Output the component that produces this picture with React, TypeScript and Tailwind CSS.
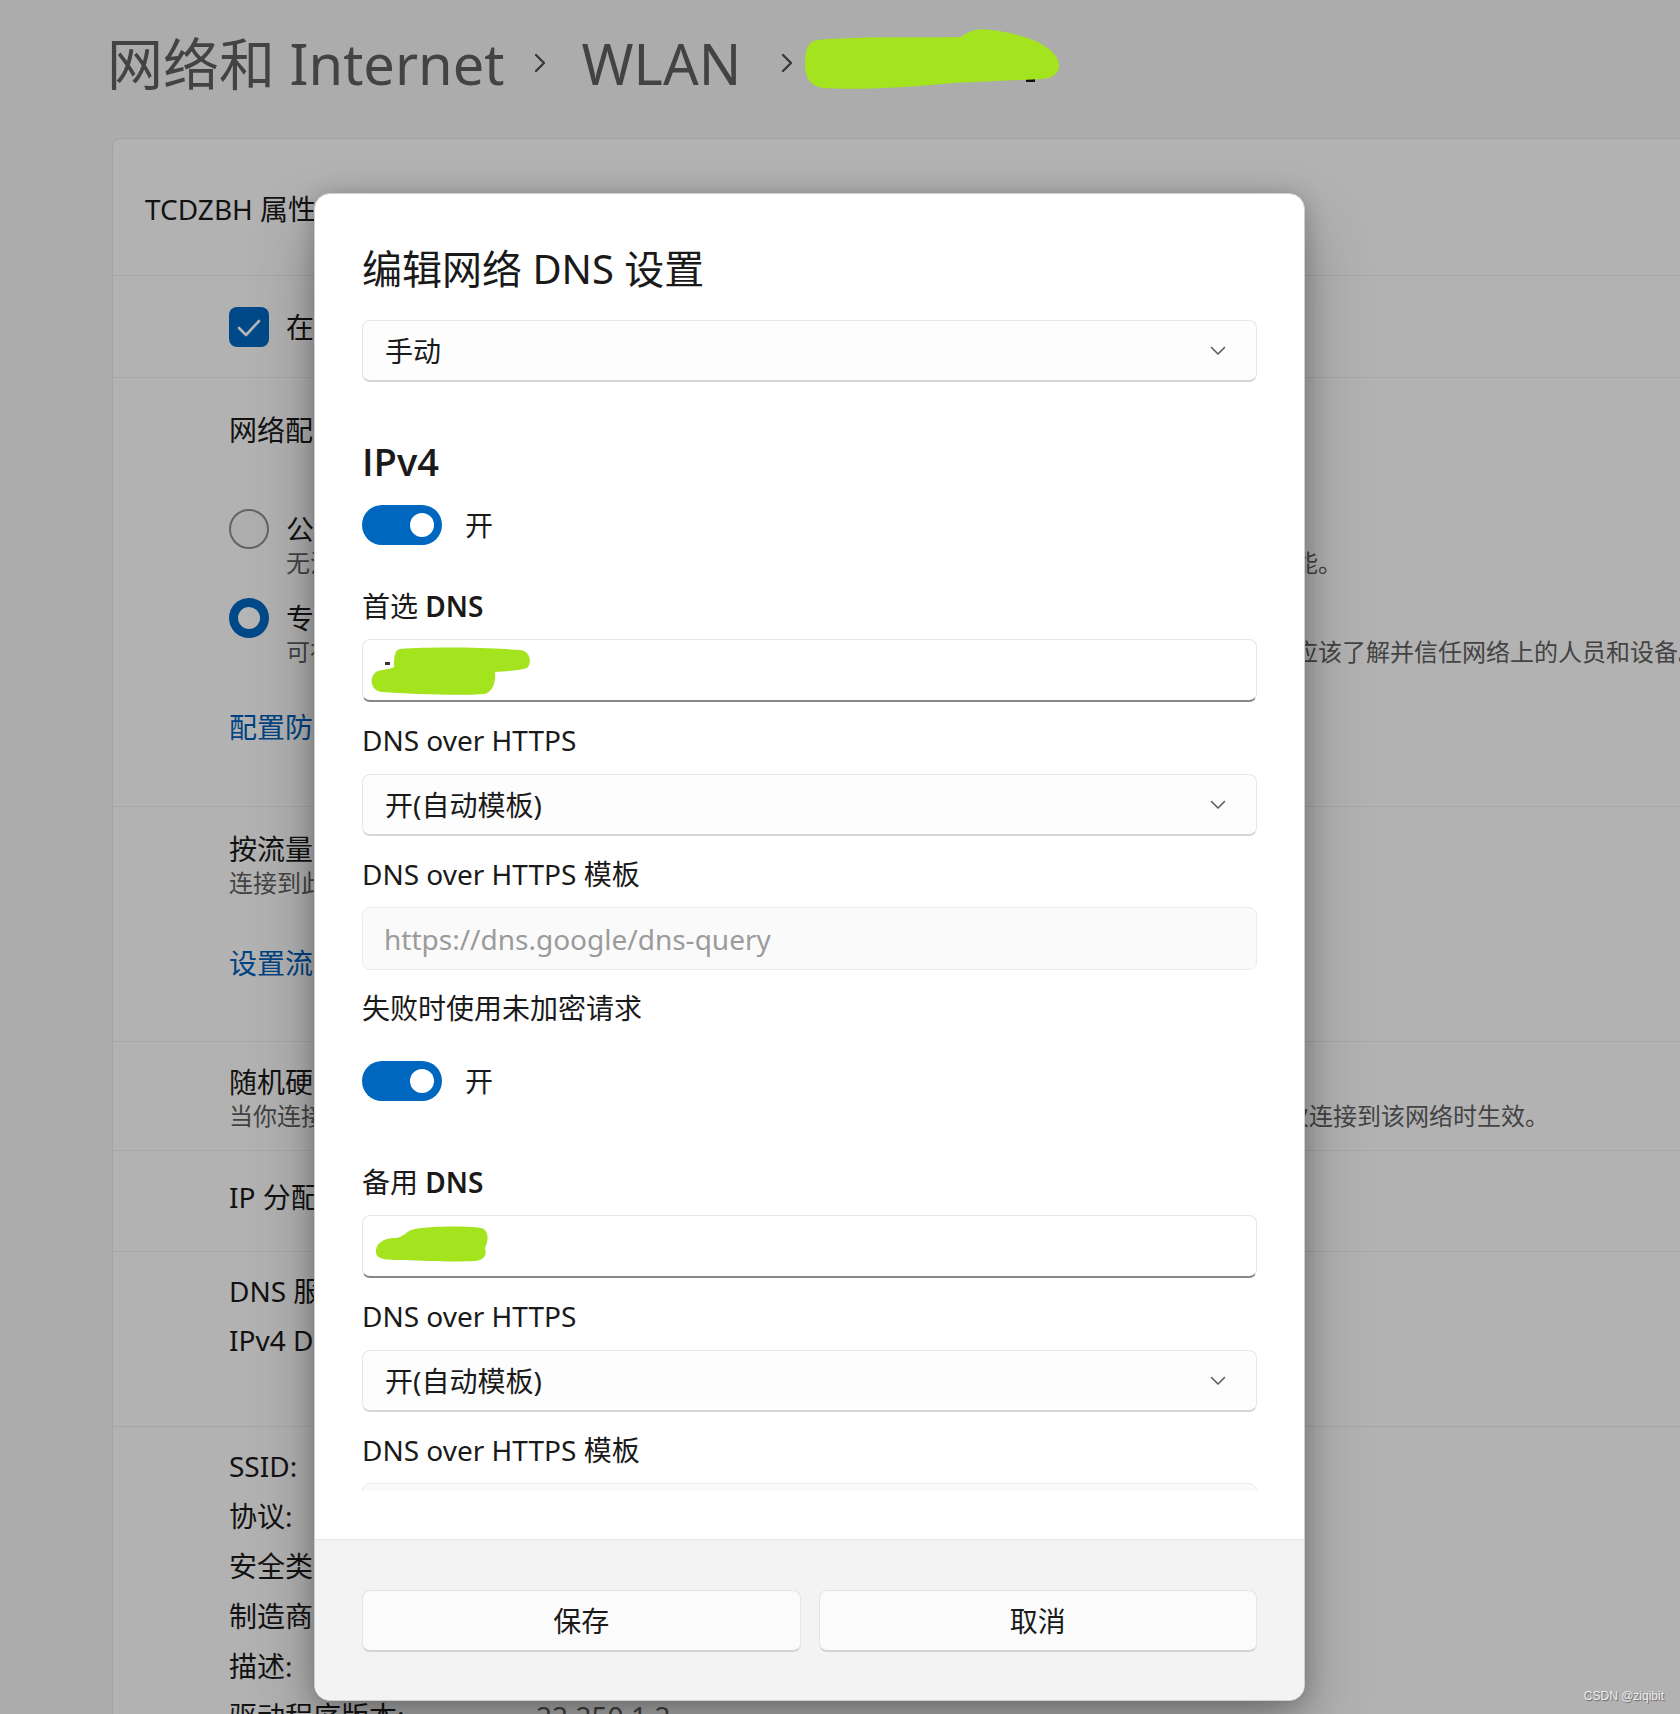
import React from "react";

const Chevron = () => (
  <svg width="16" height="10" viewBox="0 0 16 10" fill="none">
    <path d="M1.5 1.5 L8 8 L14.5 1.5" stroke="#5c5c5c" strokeWidth="1.6" strokeLinecap="round" strokeLinejoin="round" />
  </svg>
);

const Crumb = () => (
  <svg width="16" height="24" viewBox="0 0 16 24" fill="none">
    <path d="M4 4 L12 12 L4 20" stroke="#505050" strokeWidth="2.4" strokeLinecap="round" strokeLinejoin="round" />
  </svg>
);

function Toggle() {
  return (
    <div className="flex items-center">
      <div className="flex h-10 w-[80px] items-center justify-end rounded-full bg-[#0067c0] pr-2">
        <div className="h-6 w-6 rounded-full bg-white" />
      </div>
      <span className="ml-[23px] text-[28px] leading-10 text-[#1a1a1a]">开</span>
    </div>
  );
}

function Select({ value }: { value: string }) {
  return (
    <div className="flex h-[62px] items-center justify-between rounded-[8px] border border-[#e6e6e6] border-b-2 border-b-[#d6d6d6] bg-[#fdfdfd] pl-[22px] pr-[30px]">
      <span className="text-[28px] leading-10 text-[#1a1a1a]">{value}</span>
      <Chevron />
    </div>
  );
}

function Label({ children }: { children: React.ReactNode }) {
  return <div className="h-10 text-[28px] leading-10 text-[#1a1a1a]">{children}</div>;
}

export default function App() {
  return (
    <div className="relative h-[1714px] w-[1680px] overflow-hidden bg-[#f3f3f3] font-['Noto_Sans','Noto_Sans_CJK_SC',sans-serif]">
      {/* breadcrumb */}
      <div className="flex h-[138px] items-start pl-[107px] pt-[28px]">
        <div className="flex h-[70px] items-center">
          <span className="text-[56px] leading-[70px] text-[#5f5f5f]">网络和 Internet</span>
          <span className="ml-[27px] mr-[34px]"><Crumb /></span>
          <span className="text-[56px] leading-[70px] text-[#5f5f5f]">WLAN</span>
          <span className="ml-[38px]"><Crumb /></span>
        </div>
      </div>

      {/* properties card */}
      <div className="ml-[112px] w-[1620px] rounded-[8px] border border-[#e5e5e5] bg-[#fbfbfb] text-[#1a1a1a]">
        <div className="h-[136px] pl-[32px] pt-[50px] text-[28px] leading-10">TCDZBH 属性</div>

        <div className="flex h-[102px] items-center border-t border-[#eaeaea] pl-[116px]">
          <div className="flex h-10 w-10 items-center justify-center rounded-[8px] bg-[#0067c0]">
            <svg width="40" height="40" viewBox="0 0 40 40" fill="none">
              <path d="M10 21 L17 28 L30 14" stroke="white" strokeWidth="2.6" strokeLinecap="round" strokeLinejoin="round" />
            </svg>
          </div>
          <span className="ml-[17px] text-[28px] leading-10">在此网络处于范围内时自动连接</span>
        </div>

        <div className="h-[429px] border-t border-[#eaeaea] pl-[116px] pt-[32px]">
          <div className="text-[28px] leading-10">网络配置文件类型</div>
          <div className="mt-[59px] flex gap-[17px]">
            <div className="h-10 w-10 rounded-full border-2 border-[#8d8d8d] bg-[#f6f6f6]" />
            <div>
              <div className="text-[28px] leading-10">公用网络(推荐)</div>
              <div className="whitespace-nowrap text-[24px] leading-[28px] text-[#5f5f5f]">
                无法在网络上发现你的设备。在大多数情况下请使用此设置，此时将关闭文件和打印机共享等功能。
              </div>
            </div>
          </div>
          <div className="mt-[21px] flex gap-[17px]">
            <div className="flex h-10 w-10 items-center justify-center rounded-full bg-[#0067c0]">
              <div className="h-[22px] w-[22px] rounded-full bg-white" />
            </div>
            <div>
              <div className="text-[28px] leading-10">专用网络</div>
              <div className="whitespace-nowrap text-[24px] leading-[28px] text-[#5f5f5f]">
                可在网络上发现你的设备。如果需要文件共享或使用通过此网络通信的应用，请选择此设置。你应该了解并信任网络上的人员和设备。
              </div>
            </div>
          </div>
          <div className="mt-[41px] text-[28px] leading-10 text-[#005fb8]">配置防火墙和安全设置</div>
        </div>

        <div className="h-[235px] border-t border-[#eaeaea] pl-[116px] pt-[22px]">
          <div className="text-[28px] leading-10">按流量计费的连接</div>
          <div className="text-[24px] leading-[28px] text-[#5f5f5f]">连接到此网络时，某些应用的工作方式可能有所不同，以减少数据使用量</div>
          <div className="mt-[46px] text-[28px] leading-10 text-[#005fb8]">设置流量上限，以帮助控制此网络上的数据使用量</div>
        </div>

        <div className="h-[109px] border-t border-[#eaeaea] pl-[116px] pt-[20px]">
          <div className="text-[28px] leading-10">随机硬件地址</div>
          <div className="whitespace-nowrap text-[24px] leading-[28px] text-[#5f5f5f]">
            当你连接到不同网络时，使用随机硬件地址可以使其他人更难跟踪你的设备位置。此设置将在你下一次连接到该网络时生效。
          </div>
        </div>

        <div className="grid h-[101px] grid-cols-[307px_1fr] border-t border-[#eaeaea] pl-[116px] pt-[26px] text-[28px] leading-10">
          <span>IP 分配:</span>
          <span className="text-[#5f5f5f]">自动(DHCP)</span>
        </div>

        <div className="grid h-[175px] grid-cols-[307px_1fr] content-start border-t border-[#eaeaea] pl-[116px] pt-[15px] text-[28px] leading-[49px]">
          <span>DNS 服务器分配:</span>
          <span className="text-[#5f5f5f]">手动</span>
          <span>IPv4 DNS 服务器:</span>
          <span className="text-[#5f5f5f]">8.8.8.8</span>
        </div>

        <div className="grid grid-cols-[307px_1fr] border-t border-[#eaeaea] pl-[116px] pt-[14px] text-[28px] leading-[50px]">
          <span>SSID:</span>
          <span className="text-[#5f5f5f]">TCDZBH</span>
          <span>协议:</span>
          <span className="text-[#5f5f5f]">Wi-Fi 5 (802.11ac)</span>
          <span>安全类型:</span>
          <span className="text-[#5f5f5f]">WPA2-个人</span>
          <span>制造商:</span>
          <span className="text-[#5f5f5f]">Intel Corporation</span>
          <span>描述:</span>
          <span className="text-[#5f5f5f]">Intel(R) Wi-Fi 6 AX201 160MHz</span>
          <span>驱动程序版本:</span>
          <span className="text-[#5f5f5f]">22.250.1.2</span>
        </div>
      </div>

      {/* smoke layer */}
      <div className="absolute inset-0 bg-black/[0.29]" />

      {/* redaction mark over the current breadcrumb item */}
      <svg width="262" height="66" viewBox="0 0 262 66" className="absolute left-[803px] top-[28px]">
        <rect x="35" y="34" width="7" height="6" fill="#111" />
        <rect x="223" y="44" width="9" height="10" fill="#111" />
        <path
          d="M14 12 C60 8 120 10 158 9 C166 2 178 0 188 2 C215 5 245 14 254 30 C260 42 252 50 240 51 L150 55 C100 60 50 62 20 60 C6 58 2 48 2 36 C2 22 5 13 14 12 Z"
          fill="#a3e41e"
        />
      </svg>

      {/* dialog */}
      <div className="absolute left-[314px] top-[193px] flex h-[1508px] w-[991px] flex-col overflow-hidden rounded-[16px] border border-[#cfcfcf] bg-white shadow-[0_32px_64px_rgba(0,0,0,0.28),0_2px_21px_rgba(0,0,0,0.22)]">
        <div className="flex min-h-0 flex-1 flex-col px-[47px] pb-[48px] pt-[47px]">
          <div className="h-[56px] text-[40px] font-normal leading-[56px] text-[#1a1a1a]">编辑网络 DNS 设置</div>
          <div className="mt-[23px] min-h-0 flex-1 overflow-hidden">
            <Select value="手动" />

            <div className="mt-[53px] h-[52px] font-['Open_Sans',sans-serif] text-[38px] font-semibold leading-[52px] text-[#1a1a1a]">IPv4</div>
            <div className="mt-[18px]"><Toggle /></div>

            <div className="mt-[41px]"><Label>首选 <span className="font-semibold">DNS</span></Label></div>
            <div className="mt-[13px] h-[63px] rounded-[8px] border border-[#e6e6e6] border-b-2 border-b-[#878787] bg-white pl-[7px] pt-[7px]">
              <svg width="170" height="50" viewBox="0 0 170 50">
                <rect x="15" y="15" width="5" height="3" fill="#333" />
                <path
                  d="M30 2 C60 0 110 0 150 3 C160 4 162 14 158 20 C155 23 140 24 125 25 C126 32 124 44 115 47 C90 49 40 47 12 45 C0 44 -1 30 6 25 C12 22 22 22 24 20 C24 12 24 3 30 2 Z"
                  fill="#a3e41e"
                />
              </svg>
            </div>

            <div className="mt-[18px]"><Label>DNS over HTTPS</Label></div>
            <div className="mt-[14px]"><Select value="开(自动模板)" /></div>

            <div className="mt-[18px]"><Label>DNS over HTTPS 模板</Label></div>
            <div className="mt-[13px] flex h-[63px] items-center rounded-[8px] border border-[#ececec] bg-[#fafafa] pl-[21px]">
              <span className="text-[28px] leading-10 text-[#9b9b9b]">https://dns.google/dns-query</span>
            </div>

            <div className="mt-[18px]"><Label>失败时使用未加密请求</Label></div>
            <div className="mt-[33px]"><Toggle /></div>

            <div className="mt-[61px]"><Label>备用 <span className="font-semibold">DNS</span></Label></div>
            <div className="mt-[13px] h-[63px] rounded-[8px] border border-[#e6e6e6] border-b-2 border-b-[#878787] bg-white pl-[12px] pt-[10px]">
              <svg width="120" height="40" viewBox="0 0 120 40">
                <path
                  d="M40 3 C60 0 90 0 106 2 C114 4 114 14 110 22 C112 28 110 34 100 35 C80 36 50 35 30 34 C14 34 2 34 1 27 C0 18 8 12 20 12 C28 12 32 4 40 3 Z"
                  fill="#a3e41e"
                />
              </svg>
            </div>

            <div className="mt-[18px]"><Label>DNS over HTTPS</Label></div>
            <div className="mt-[14px]"><Select value="开(自动模板)" /></div>

            <div className="mt-[18px]"><Label>DNS over HTTPS 模板</Label></div>
            <div className="mt-[13px] h-[63px] rounded-[8px] border border-[#ececec] bg-[#fafafa]" />
          </div>
        </div>

        <div className="flex h-[161px] shrink-0 gap-[18px] border-t border-[#e5e5e5] bg-[#f3f3f3] px-[47px] pt-[50px]">
          <button className="h-[62px] flex-1 rounded-[8px] border border-[#e5e5e5] border-b-2 border-b-[#d4d4d4] bg-[#fbfbfb] text-[28px] text-[#1a1a1a]">
            保存
          </button>
          <button className="h-[62px] flex-1 rounded-[8px] border border-[#e5e5e5] border-b-2 border-b-[#d4d4d4] bg-[#fbfbfb] text-[28px] text-[#1a1a1a]">
            取消
          </button>
        </div>
      </div>

      <div className="absolute bottom-[9px] right-[16px] font-['Liberation_Sans',sans-serif] text-[12px] text-[#eeeeee] [text-shadow:1px_1px_1px_rgba(0,0,0,0.45)]">
        CSDN @ziqibit
      </div>
    </div>
  );
}
